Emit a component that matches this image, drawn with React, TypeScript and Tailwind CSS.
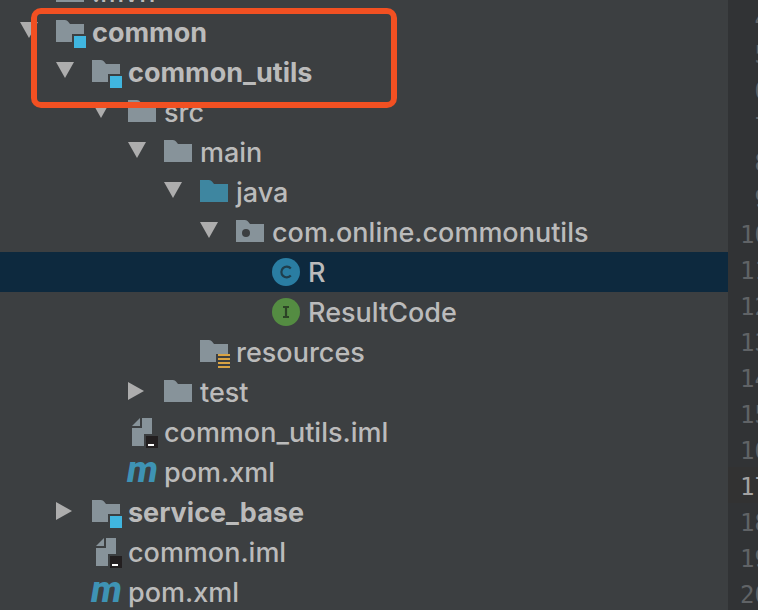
import { useState } from "react";
import clsx from "clsx";

type IconKind =
  | "folder"
  | "module"
  | "source"
  | "package"
  | "resources"
  | "class"
  | "interface"
  | "iml"
  | "maven";

type TreeNode = {
  id: string;
  label: string;
  icon: IconKind;
  indent: string;
  arrow?: "open" | "closed";
  bold?: boolean;
};

const nodes: TreeNode[] = [
  { id: "mvn", label: ".mvn", icon: "folder", indent: "pl-[14px]" },
  { id: "common", label: "common", icon: "module", indent: "pl-[14px]", arrow: "open", bold: true },
  { id: "common_utils", label: "common_utils", icon: "module", indent: "pl-[50px]", arrow: "open", bold: true },
  { id: "src", label: "src", icon: "folder", indent: "pl-[86px]", arrow: "open" },
  { id: "main", label: "main", icon: "folder", indent: "pl-[122px]", arrow: "open" },
  { id: "java", label: "java", icon: "source", indent: "pl-[158px]", arrow: "open" },
  { id: "package", label: "com.online.commonutils", icon: "package", indent: "pl-[194px]", arrow: "open" },
  { id: "r", label: "R", icon: "class", indent: "pl-[230px]" },
  { id: "resultcode", label: "ResultCode", icon: "interface", indent: "pl-[230px]" },
  { id: "resources", label: "resources", icon: "resources", indent: "pl-[158px]" },
  { id: "test", label: "test", icon: "folder", indent: "pl-[122px]", arrow: "closed" },
  { id: "utils_iml", label: "common_utils.iml", icon: "iml", indent: "pl-[86px]" },
  { id: "utils_pom", label: "pom.xml", icon: "maven", indent: "pl-[86px]" },
  { id: "service_base", label: "service_base", icon: "module", indent: "pl-[50px]", arrow: "closed", bold: true },
  { id: "common_iml", label: "common.iml", icon: "iml", indent: "pl-[50px]" },
  { id: "common_pom", label: "pom.xml", icon: "maven", indent: "pl-[50px]" },
];

const lines = [4, 5, 6, 7, 8, 9, 10, 11, 12, 13, 14, 15, 16, 17, 18, 19, 20];
const currentLine = 17;

function NodeIcon({ kind }: { kind: IconKind }) {
  return (
    <svg className="size-8 shrink-0 overflow-visible" viewBox="0 0 32 32" aria-hidden="true">
      {(kind === "folder" || kind === "source") && (
        <path d="M2 4h9q2 0 3 1.5L16 8h14v18H2z" fill={kind === "source" ? "#3e86a0" : "#87939a"} />
      )}
      {kind === "package" && (
        <>
          <path d="M2 4h9q2 0 3 1.5L16 8h14v18H2z" fill="#87939a" />
          <circle cx="12" cy="17" r="4" fill="#3c3f41" />
        </>
      )}
      {(kind === "module" || kind === "resources") && (
        <path d="M2 4h9q2 0 3 1.5L16 8h14v10H18v8H2z" fill="#87939a" />
      )}
      {kind === "module" && <path d="M20 20h12v12H20z" fill="#40b6e0" />}
      {kind === "resources" && (
        <path d="M20 18h12v2H20zM20 22h12v2H20zM20 26h12v2H20zM20 30h12v2H20z" fill="#d9a343" />
      )}
      {kind === "class" && (
        <>
          <circle cx="16" cy="16" r="14" fill="#2a7da2" />
          <path d="M20.8 12.4A5.4 5.4 0 1 0 20.8 19.6" fill="none" stroke="#1f3e4c" strokeWidth="2.2" />
        </>
      )}
      {kind === "interface" && (
        <>
          <circle cx="16" cy="16" r="14" fill="#548c42" />
          <path d="M13 11h6M13 21h6M16 11v10" fill="none" stroke="#2c4426" strokeWidth="2.2" />
        </>
      )}
      {kind === "iml" && (
        <>
          <path d="M14 2v8H6z" fill="#87939a" />
          <path d="M16 2h10v16h-8v12H6V12h10z" fill="#87939a" />
          <path d="M20 20h12v12H20z" fill="#231f20" />
          <path d="M22 28h6v2h-6z" fill="#fff" />
        </>
      )}
      {kind === "maven" && (
        <text x="1" y="26" fontFamily="Roboto, sans-serif" fontSize="37" fontStyle="italic" fontWeight="800" fill="#3e93b4">
          m
        </text>
      )}
    </svg>
  );
}

function Arrow({ state }: { state: "open" | "closed" }) {
  return (
    <svg className="size-8" viewBox="0 0 32 32" fill="#adadad" aria-hidden="true">
      {state === "open" ? <path d="M6 6h18l-9 16z" /> : <path d="M6 6l16 9-16 9z" />}
    </svg>
  );
}

export default function App() {
  const [selected, setSelected] = useState("r");

  return (
    <div className="relative flex h-screen overflow-hidden bg-[#3c3f41]">
      <nav className="min-w-0 flex-1" aria-label="Project">
        <ul className="-mt-7 font-['Inter',sans-serif] text-[27px] leading-10 font-medium text-[#bbbbbb]">
          {nodes.map((node) => (
            <li
              key={node.id}
              className={clsx("flex h-10 items-center", node.indent, selected === node.id && "bg-[#0d293e]")}
            >
              {node.arrow ? (
                <button className="mr-2 size-8 shrink-0" aria-label={"Toggle " + node.label}>
                  <Arrow state={node.arrow} />
                </button>
              ) : (
                <span className="mr-2 size-8 shrink-0" />
              )}
              <button
                className={clsx("flex h-10 items-center gap-1.5 whitespace-nowrap", node.bold && "font-bold")}
                onClick={() => setSelected(node.id)}
              >
                <NodeIcon kind={node.icon} />
                <span className="pt-0.5">{node.label}</span>
              </button>
            </li>
          ))}
        </ul>
      </nav>

      <aside className="w-[30px] shrink-0 overflow-hidden bg-[#313335]">
        <ol className="-mt-px font-['DejaVu_Sans_Mono',monospace] text-2xl leading-10 text-[#606366]">
          {lines.map((line) => (
            <li key={line} className={clsx("h-9 pl-3", line === currentLine && "bg-[#323232] text-[#a4a3a3]")}>
              <span className="block w-[29px] text-right">{line}</span>
            </li>
          ))}
        </ol>
      </aside>

      <div className="pointer-events-none absolute top-2 left-[31px] h-[100px] w-[366px] rounded-[10px] border-6 border-[#f25022]" />
    </div>
  );
}
